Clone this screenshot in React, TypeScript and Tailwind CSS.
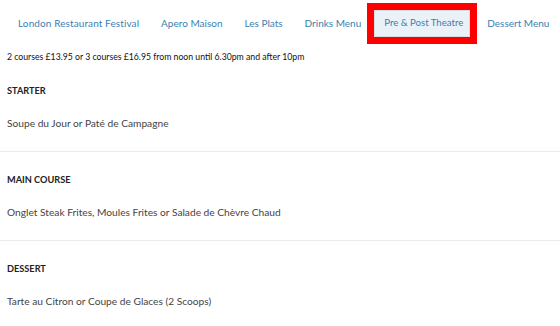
export default function App() {
  const links = [
    { t: "London Restaurant Festival", c: "tracking-[0.1px]" },
    { t: "Apero Maison", c: "" },
    { t: "Les Plats", c: "" },
    { t: "Drinks Menu", c: "" },
    { t: "Pre & Post Theatre", c: "" },
    { t: "Dessert Menu", c: "" },
  ];
  const sections = [
    { title: "STARTER", item: "Soupe du Jour or Paté de Campagne" },
    { title: "MAIN COURSE", item: "Onglet Steak Frites, Moules Frites or Salade de Chèvre Chaud" },
    { title: "DESSERT", item: "Tarte au Citron or Coupe de Glaces (2 Scoops)" },
  ];
  return (
    <div className="w-[560px] h-[326px] overflow-hidden bg-white" style={{ fontFamily: "Lato, 'Liberation Sans', sans-serif" }}>
      <nav className="flex items-center h-[46px] pl-[7px] whitespace-nowrap">
        {links.map((l) => {
          const active = l.t === "Pre & Post Theatre";
          return active ? (
            <div
              key={l.t}
              className="ml-[2px] mr-[6px] shrink-0 bg-[#eaf2f8] border border-[#d6dde3] pl-[9px] pr-[6px] h-[27px] flex items-center text-[9.6px] text-[#3a7fb0] outline-[7px] outline-solid outline-[#ff0000]"
            >
              {l.t}
            </div>
          ) : (
            <div key={l.t} className={`px-[11px] text-[10px] text-[#3a7fb0] leading-[27px] shrink-0 ${l.c}`}>
              {l.t}
            </div>
          );
        })}
      </nav>
      <div className="px-[7px] text-[8.7px] text-[#111] leading-[12px] h-[17px] pt-[5px] whitespace-nowrap">
        2 courses £13.95 or 3 courses £16.95 from noon until 6.30pm and after 10pm
      </div>
      {sections.map((s) => (
        <div key={s.title} className="border-b border-[#ebebeb] h-[89px] px-[7px] flex flex-col">
          <div className="pt-[21px] text-[9.2px] font-bold text-[#222] leading-[14px]">{s.title}</div>
          <div className="pt-[18px] text-[10.2px] text-[#444] leading-[14px]">{s.item}</div>
        </div>
      ))}
    </div>
  );
}
